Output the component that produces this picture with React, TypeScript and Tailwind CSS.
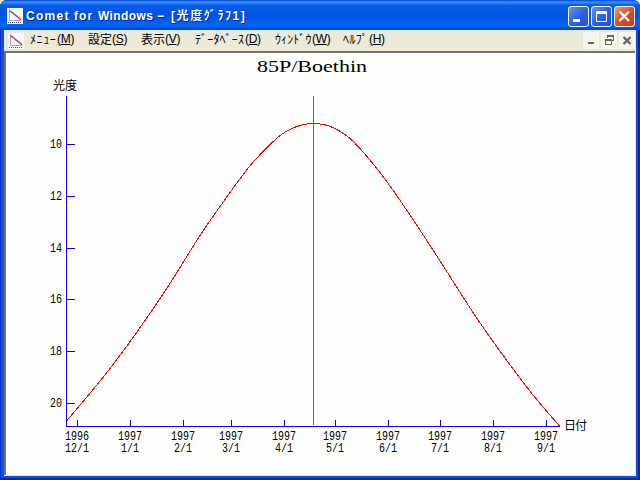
import { ReactNode } from "react";

const MENUS = [
  { label: "ﾒﾆｭｰ", key: "M", width: "w-[58px]", labelWidth: "w-[27px] tracking-[0.6px]" },
  { label: "設定", key: "S", width: "w-[53px]", labelWidth: "w-6" },
  { label: "表示", key: "V", width: "w-[54px]", labelWidth: "w-6" },
  { label: "ﾃﾞｰﾀﾍﾞｰｽ", key: "D", width: "w-20", labelWidth: "w-[50px] tracking-[0.2px]" },
  { label: "ｳｨﾝﾄﾞｳ", key: "W", width: "w-[68px]", labelWidth: "w-[37px] tracking-[0.1px]" },
  { label: "ﾍﾙﾌﾟ", key: "H", width: "w-[46px]", labelWidth: "w-[26px] tracking-[0.4px]" },
];

const MAGNITUDES = [
  { value: 10, y: 144 },
  { value: 12, y: 196 },
  { value: 14, y: 248 },
  { value: 16, y: 299 },
  { value: 18, y: 351 },
  { value: 20, y: 403 },
];

const MONTHS = [
  { year: "1996", day: "12/1", x: 77 },
  { year: "1997", day: "1/1", x: 130 },
  { year: "1997", day: "2/1", x: 183 },
  { year: "1997", day: "3/1", x: 231 },
  { year: "1997", day: "4/1", x: 284 },
  { year: "1997", day: "5/1", x: 335 },
  { year: "1997", day: "6/1", x: 388 },
  { year: "1997", day: "7/1", x: 440 },
  { year: "1997", day: "8/1", x: 493 },
  { year: "1997", day: "9/1", x: 546 },
];

const POINTS = [
  [67, 420.5], [103.3, 377], [135, 334.8], [166.7, 288.5], [200, 235.5], [225, 199.5],
  [247, 169.5], [260, 154.7], [280, 135.5], [296, 126.8], [313.5, 123.5], [331, 126.8],
  [350, 138.5], [369.3, 159.3], [390, 186], [413.3, 220], [440.3, 261.3], [476.7, 318],
  [506.7, 360.3], [533, 395], [559.5, 426],
];

// Catmull-Rom spline written as cubic segments
function toPath(points: number[][]) {
  let d = `M${points[0].join(" ")}`;
  for (let i = 0; i < points.length - 1; i++) {
    const p0 = points[i - 1] ?? points[i];
    const p1 = points[i];
    const p2 = points[i + 1];
    const p3 = points[i + 2] ?? p2;
    d += ` C${p1[0] + (p2[0] - p0[0]) / 6} ${p1[1] + (p2[1] - p0[1]) / 6}`;
    d += ` ${p2[0] - (p3[0] - p1[0]) / 6} ${p2[1] - (p3[1] - p1[1]) / 6} ${p2[0]} ${p2[1]}`;
  }
  return d;
}

function GraphIcon() {
  return (
    <svg width="16" height="16" viewBox="0 0 16 16" className="shrink-0 bg-[#f8f8ff]">
      <path d="M2.5 1v11.500H14" fill="none" stroke="#a3a9e0" />
      <path d="M2.500 3l3 1.500 3 3 2 1 3.500 3.500" fill="none" stroke="#c93a4e" strokeWidth="1.500" />
      <path d="M1 14.500h13" stroke="#555" strokeDasharray="1 1" />
    </svg>
  );
}

function CaptionButton({ close, children }: { close?: boolean; children: ReactNode }) {
  return (
    <button
      className={`h-[21px] w-[21px] rounded-[3px] border border-[#f4f6ff] ${
        close
          ? "bg-linear-to-br from-[#ee9478] via-[#dc4b28] to-[#c83c16]"
          : "bg-linear-to-br from-[#6a92f4] via-[#2e62e2] to-[#1d4fd4]"
      }`}
    >
      <svg width="19" height="19" viewBox="0 0 19 19" fill="none" stroke="#fff">
        {children}
      </svg>
    </button>
  );
}

function ChildButton({ children }: { children: ReactNode }) {
  return (
    <button className="h-[17px] w-4 bg-[#f5f4ed]">
      <svg width="16" height="17" viewBox="0 0 16 17" fill="none" stroke="#68665c">
        {children}
      </svg>
    </button>
  );
}

function Chart() {
  return (
    <svg width="628" height="421" viewBox="6 53 628 421" className="block">
      <text x="257" y="72" textLength="110" lengthAdjust="spacingAndGlyphs" fontSize="17" className="font-['Liberation_Serif',serif]">
        85P/Boethin
      </text>
      <g fontSize="12" className="font-['Noto_Sans_CJK_JP',sans-serif]">
        <text x="53" y="90" textLength="24">光度</text>
        <text x="564" y="430" textLength="23">日付</text>
      </g>
      <g stroke="#1400ff" shapeRendering="crispEdges">
        <path d="M66.5 96V426.500H560" fill="none" />
        {MAGNITUDES.map((m) => (
          <path key={m.value} d={`M67 ${m.y + 0.5}h8`} />
        ))}
        {MONTHS.map((m) => (
          <path key={m.x} d={`M${m.x + 0.5} 420v6`} />
        ))}
      </g>
      <g fontSize="12" className="font-['Liberation_Mono',monospace]">
        {MAGNITUDES.map((m) => (
          <text key={m.value} x="50" y={m.y + 4} textLength="12" lengthAdjust="spacingAndGlyphs">
            {m.value}
          </text>
        ))}
        {MONTHS.map((m) => (
          <g key={m.x}>
            <text x={m.x - 12} y="440" textLength="24" lengthAdjust="spacingAndGlyphs">{m.year}</text>
            <text x={m.x - m.day.length * 3} y="452" textLength={m.day.length * 6} lengthAdjust="spacingAndGlyphs">
              {m.day}
            </text>
          </g>
        ))}
      </g>
      <path d={toPath(POINTS)} fill="none" stroke="#f00" shapeRendering="crispEdges" />
      <path d="M313.5 96V425" stroke="#f0f" shapeRendering="crispEdges" />
    </svg>
  );
}

export default function App() {
  return (
    <div className="h-[480px] w-[640px] overflow-hidden bg-[#eceadb]">
      <div className="flex h-full flex-col overflow-hidden rounded-t-[7px] bg-[#0a50e6] shadow-[inset_-2px_-2px_0_#0526a8,inset_1px_0_0_#0b30c4]">
        <header className="flex h-[30px] shrink-0 items-center bg-[linear-gradient(#0a45d0,#3590ff_7%,#0a5be8_18%,#0053e0_50%,#0065fa_85%,#0048d0)] pt-[2px] pr-[5px] pl-[7px]">
          <GraphIcon />
          <h1 className="ml-[3px] flex text-[12px] leading-4 font-bold whitespace-pre text-white [text-shadow:1px_1px_#0a2c8c]">
            <span className="w-[48px] font-['Liberation_Sans',sans-serif] tracking-[1.3px]">Comet</span>
            <span className="w-[24px] font-['Liberation_Sans',sans-serif] tracking-[1.1px]">for</span>
            <span className="w-[59px] font-['Liberation_Sans',sans-serif] tracking-[0.4px]">Windows</span>
            <span className="w-[14px] font-['Liberation_Sans',sans-serif]">−</span>
            <span className="font-['Liberation_Sans','Noto_Sans_CJK_JP',sans-serif] tracking-[1.6px]">[光度ｸﾞﾗﾌ1]</span>
          </h1>
          <div className="ml-auto flex gap-[2px]">
            <CaptionButton><path d="M4 13.500h7" strokeWidth="3" /></CaptionButton>
            <CaptionButton><path d="M4.5 14.500v-10h10v10zM4 5.500h11M4 6.500h11" /></CaptionButton>
            <CaptionButton close><path d="M4.500 4.500l9.500 9.500M14 4.500l-9.500 9.500" strokeWidth="2.400" /></CaptionButton>
          </div>
        </header>
        <div className="mx-1 mb-1 flex min-h-0 flex-1 flex-col bg-[#ece9d8] pr-px pb-px">
          <nav className="flex h-[21px] shrink-0 items-center pl-1">
            <GraphIcon />
            <div className="ml-[6px] flex pb-1 text-[12px] leading-4 text-black">
              {MENUS.map((m) => (
                <div key={m.key} className={`flex shrink-0 whitespace-nowrap ${m.width}`}>
                  <span className={`shrink-0 font-['Noto_Sans_CJK_JP',sans-serif] ${m.labelWidth}`}>{m.label}</span>
                  <span className="font-['Liberation_Sans',sans-serif] tracking-[-0.3px]">
                    (<u className="underline-offset-1">{m.key}</u>)
                  </span>
                </div>
              ))}
            </div>
            <div className="ml-auto flex gap-[2px]">
              <ChildButton><path d="M5 11h6" strokeWidth="2" /></ChildButton>
              <ChildButton>
                <path d="M6.5 6v-2.500h6v5h-2.500M6 4.500h7M4.500 7.500h6v5h-6zM4 8.500h7" shapeRendering="crispEdges" />
              </ChildButton>
              <ChildButton><path d="M4.500 5l7 7M11.500 5l-7 7" strokeWidth="2.300" /></ChildButton>
            </div>
          </nav>
          <main className="min-h-0 flex-1 overflow-hidden border-t-2 border-l-2 border-[#77756a] bg-[#fefefc]">
            <Chart />
          </main>
        </div>
      </div>
    </div>
  );
}
